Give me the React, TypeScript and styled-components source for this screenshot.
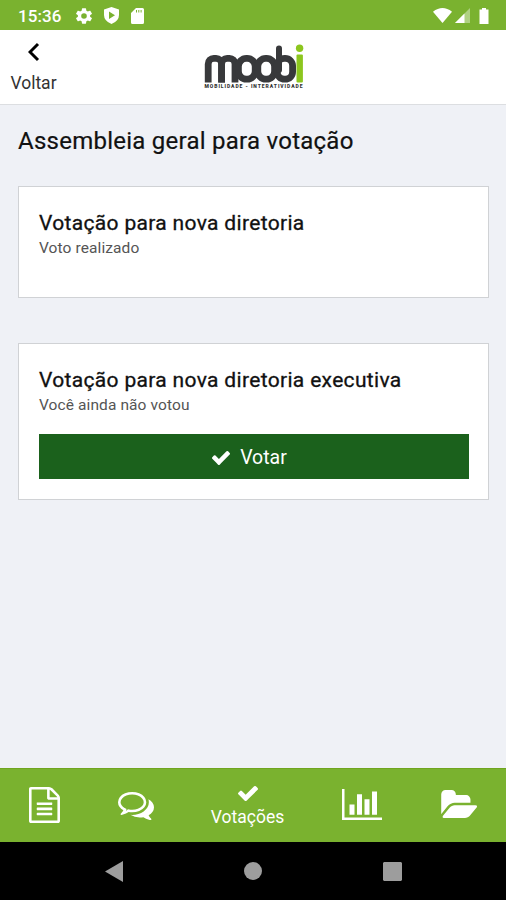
import React from "react";
import styled, { createGlobalStyle } from "styled-components";

const GlobalStyle = createGlobalStyle`
  * { box-sizing: border-box; }
  body { margin: 0; font-family: Roboto, "Liberation Sans", sans-serif; background: #eff1f6; }
  h1, h2, p { margin: 0; }
  button { font: inherit; border: 0; padding: 0; background: none; cursor: pointer; }
  svg { display: block; }
`;

const Screen = styled.div`
  width: 506px;
  height: 900px;
  display: flex;
  flex-direction: column;
  overflow: hidden;
`;

const StatusBar = styled.div`
  height: 30px;
  flex: none;
  display: flex;
  align-items: center;
  justify-content: space-between;
  padding: 1px 16px 0 18px;
  background: #7ab22f;
  color: #fff;
`;

const StatusGroup = styled.div<{ $gap: number }>`
  display: flex;
  align-items: center;
  gap: ${(p) => p.$gap}px;
`;

const Clock = styled.span`
  width: 45px;
  margin-right: 1px;
  font-size: 17px;
  font-weight: 500;
  letter-spacing: 0.1px;
  white-space: nowrap;
`;

const Header = styled.header`
  height: 75px;
  flex: none;
  display: grid;
  grid-template-columns: 67px 1fr 67px;
  background: #fff;
  border-bottom: 1px solid #dcdee1;
`;

const BackButton = styled.button`
  display: flex;
  flex-direction: column;
  align-items: center;
  padding-top: 12px;
  gap: 11px;
  color: #333;
  font-size: 17.5px;
  line-height: 20px;
`;

const LogoBox = styled.div`
  display: flex;
  justify-content: center;
  padding-top: 12px;
`;

const Content = styled.main`
  flex: 1;
  padding: 21px 17px 0 18px;
`;

const PageTitle = styled.h1`
  font-size: 24px;
  font-weight: 400;
  line-height: 30px;
  letter-spacing: 0.25px;
  color: #111;
  -webkit-text-stroke: 0.2px #111;
  white-space: nowrap;
`;

const Card = styled.section<{ $height: number; $top: number }>`
  height: ${(p) => p.$height}px;
  margin-top: ${(p) => p.$top}px;
  padding: 23px 19px 0 20px;
  background: #fff;
  border: 1px solid #d0d2d5;
`;

const CardTitle = styled.h2`
  font-size: 21px;
  font-weight: 400;
  line-height: 26px;
  letter-spacing: 0.33px;
  color: #111;
  -webkit-text-stroke: 0.3px #111;
  white-space: nowrap;
`;

const CardNote = styled.p`
  font-size: 15.5px;
  line-height: 24px;
  letter-spacing: 0.1px;
  color: #555;
`;

const VoteButton = styled.button`
  width: 100%;
  height: 45px;
  margin-top: 17px;
  padding: 2px 9px 0 0;
  display: flex;
  align-items: center;
  justify-content: center;
  gap: 10px;
  background: #1b611c;
  color: #fff;
  font-size: 19.5px;
`;

const TabBar = styled.nav`
  height: 74px;
  flex: none;
  display: grid;
  grid-template-columns: 89px 93px 131px 98px 95px;
  background: #7ab22f;
  border-top: 1px solid #70a51f;
`;

const Tab = styled.button<{ $top: number }>`
  display: flex;
  flex-direction: column;
  align-items: center;
  padding-top: ${(p) => p.$top}px;
  color: #fff;
`;

const TabLabel = styled.span`
  margin-top: 5px;
  font-size: 17.5px;
  line-height: 22px;
`;

const SystemNav = styled.div`
  height: 58px;
  flex: none;
  display: flex;
  justify-content: center;
  align-items: center;
  gap: 121px;
  background: #000;
  color: #9d9d9d;
`;

type IconProps = { box: string; w: number; h: number; d: string };

const Icon = ({ box, w, h, d }: IconProps) => (
  <svg viewBox={box} width={w} height={h} preserveAspectRatio="none" fill="currentColor" aria-hidden>
    <path fillRule="evenodd" d={d} />
  </svg>
);

const CHECK =
  "M1671 566q0 40-28 68l-724 724-136 136q-28 28-68 28t-68-28l-136-136-362-362q-28-28-28-68t28-68l136-136q28-28 68-28t68 28l294 295 656-657q28-28 68-28t68 28l136 136q28 28 28 68z";
const DOCUMENT =
  "M1596 380q28 28 48 76t20 88v1152q0 40-28 68t-68 28h-1344q-40 0-68-28t-28-68v-1600q0-40 28-68t68-28h896q40 0 88 20t76 48zm-444-244v376h376q-10-29-22-41l-313-313q-12-12-41-22zm384 1528v-1024h-416q-40 0-68-28t-28-68v-416h-768v1536h1280zm-1024-864q0-14 9-23t23-9h704q14 0 23 9t9 23v64q0 14-9 23t-23 9h-704q-14 0-23-9t-9-23v-64zm736 224q14 0 23 9t9 23v64q0 14-9 23t-23 9h-704q-14 0-23-9t-9-23v-64q0-14 9-23t23-9h704zm0 256q14 0 23 9t9 23v64q0 14-9 23t-23 9h-704q-14 0-23-9t-9-23v-64q0-14 9-23t23-9h704z";
const COMMENTS =
  "M704 384q-153 0-286 52t-211.5 141-78.5 191q0 82 53 158t149 132l97 56-35 84q34-20 62-39l44-31 53 10q78 14 153 14 153 0 286-52t211.5-141 78.5-191-78.5-191-211.5-141-286-52zm0-128q191 0 353.5 68.5t256.5 186.5 94 257-94 257-256.5 186.5-353.5 68.5q-86 0-176-16-124 88-278 128-36 9-86 16h-3q-11 0-20.5-8t-11.5-21q-1-3-1-6.5t.5-6.5 2-6l2.5-5 3.5-5.5 4-5 4.5-5 4-4.5q5-6 23-25t26-29.5 22.5-29 25-38.5 20.5-44q-124-72-195-177t-71-224q0-139 94-257t256.5-186.5 353.5-68.5zm822 1169q10 24 20.5 44t25 38.5 22.5 29 26 29.5 23 25q1 1 4 4.5t4.5 5 4 5 3.5 5.5l2.5 5 2 6 .5 6.5-1 6.5q-3 14-13 22t-22 7q-50-7-86-16-154-40-278-128-90 16-176 16-271 0-472-132 58 4 88 4 161 0 309-45t264-129q125-92 192-212t67-254q0-77-23-152 129 71 204 178t75 230q0 120-71 224.5t-195 176.5z";
const CHART =
  "M640 896v512h-256v-512h256zm384-512v1024h-256v-1024h256zm1024 1152v128h-2048v-1536h128v1408h1920zm-640-896v768h-256v-768h256zm384-384v1152h-256v-1152h256z";
const FOLDER =
  "M1943 952q0 31-31 66l-336 396q-43 51-120.5 86.5t-143.5 35.5h-1088q-34 0-60.5-13t-26.5-43q0-31 31-66l336-396q43-51 120.5-86.5t143.5-35.5h1088q34 0 60.5 13t26.5 43zm-343-344v160h-832q-94 0-197 47.5t-164 119.5l-337 396-5 6q0-4-.5-12.5t-.5-12.5v-960q0-92 66-158t158-66h320q92 0 158 66t66 158v32h544q92 0 158 66t66 158z";
const GEAR =
  "M19.14 12.94c.04-.3.06-.61.06-.94 0-.32-.02-.64-.07-.94l2.03-1.58a.49.49 0 0 0 .12-.61l-1.92-3.32a.49.49 0 0 0-.59-.22l-2.39.96a7 7 0 0 0-1.62-.94l-.36-2.54a.48.48 0 0 0-.48-.41h-3.84a.48.48 0 0 0-.47.41l-.36 2.54c-.59.24-1.13.57-1.62.94l-2.39-.96a.48.48 0 0 0-.59.22L2.74 8.87a.48.48 0 0 0 .12.61l2.03 1.58c-.05.3-.09.63-.09.94s.02.64.07.94l-2.03 1.58a.49.49 0 0 0-.12.61l1.92 3.32c.12.22.37.29.59.22l2.39-.96c.5.38 1.03.7 1.62.94l.36 2.54c.05.24.24.41.48.41h3.84c.24 0 .44-.17.47-.41l.36-2.54a7 7 0 0 0 1.62-.94l2.39.96c.22.08.47 0 .59-.22l1.92-3.32a.48.48 0 0 0-.12-.61zM12 15.3a3.3 3.3 0 1 1 0-6.6 3.3 3.3 0 0 1 0 6.6z";

/* Interlocking arches and rings over a tagline. */
const Logo = () => (
  <svg width="106" height="50" viewBox="0 0 106 50" role="img" aria-label="moobi">
    <g fill="none" stroke="#38393b" strokeWidth="6.8">
      <svg width="106" height="40.6" viewBox="0 0 106 40.6">
        <rect x="8.2" y="16.4" width="13.4" height="50" rx="5.5" />
        <rect x="21.6" y="16.4" width="13.4" height="50" rx="5.5" />
      </svg>
      <rect x="38.4" y="16.4" width="16.8" height="20.8" rx="8" />
      <rect x="57.8" y="16.4" width="16.8" height="20.8" rx="8" />
      <rect x="77.2" y="16.4" width="15.4" height="20.8" rx="7.4" />
      <line x1="79" y1="6.4" x2="79" y2="28" strokeWidth="6" strokeLinecap="round" />
    </g>
    <g fill="#8cc61e">
      <circle cx="99.6" cy="6.2" r="3.7" />
      <rect x="96.5" y="12.5" width="6.4" height="28" rx="1" />
    </g>
    <text x="4.5" y="46.4" fontFamily="Roboto, sans-serif" fontSize="5" fontWeight="900" fill="#333" textLength="98" lengthAdjust="spacing">
      MOBILIDADE - INTERATIVIDADE
    </text>
  </svg>
);

export default function App() {
  return (
    <>
      <GlobalStyle />
      <Screen>
        <StatusBar>
          <StatusGroup $gap={12}>
            <Clock>15:36</Clock>
            <Icon box="2.6 2 18.8 20" w={16} h={16} d={GEAR} />
            <Icon box="0 0 15 17" w={15} h={17} d="M7.5 0L15 2.5V8q0 6-7.5 9Q0 14 0 8V2.5zM5 4.5v7.5l6-3.75z" />
            <Icon box="0 0 13 16" w={13} h={16} d="M5 0h6.5Q13 0 13 1.5v13Q13 16 11.5 16h-10Q0 16 0 14.5V5zM5 2v2.5h1V2zM7.3 2v2.5h1V2zM9.6 2v2.5h1V2z" />
          </StatusGroup>
          <StatusGroup $gap={3}>
            <Icon box="0 0 20 16" w={19} h={15} d="M0 4Q10-4 20 4L10 16z" />
            <svg width="15" height="15" viewBox="0 0 15 15" fill="#fff" aria-hidden>
              <path d="M15 0v15H0z" opacity=".4" />
              <path d="M9.5 5.5V15H0z" />
            </svg>
            <svg width="17" height="16" viewBox="0 0 17 16" fill="#fff" aria-hidden>
              <path d="M9 0h4v1.5h2.5V16h-9V1.5H9z" />
            </svg>
          </StatusGroup>
        </StatusBar>
        <Header>
          <BackButton>
            <svg width="12" height="20" viewBox="0 0 12 20" fill="none" stroke="#000" strokeWidth="3" aria-hidden>
              <path d="M10 2L2 10L10 18" />
            </svg>
            Voltar
          </BackButton>
          <LogoBox>
            <Logo />
          </LogoBox>
        </Header>
        <Content>
          <PageTitle>Assembleia geral para votação</PageTitle>
          <Card $height={112} $top={30}>
            <CardTitle>Votação para nova diretoria</CardTitle>
            <CardNote>Voto realizado</CardNote>
          </Card>
          <Card $height={157} $top={45}>
            <CardTitle>Votação para nova diretoria executiva</CardTitle>
            <CardNote>Você ainda não votou</CardNote>
            <VoteButton>
              <Icon box="121 334 1550 1188" w={18} h={14} d={CHECK} />
              Votar
            </VoteButton>
          </Card>
        </Content>
        <TabBar>
          <Tab $top={18} aria-label="Documentos">
            <Icon box="128 0 1536 1792" w={31} h={36} d={DOCUMENT} />
          </Tab>
          <Tab $top={23} aria-label="Mensagens">
            <Icon box="0 256 1792 1408" w={36} h={28} d={COMMENTS} />
          </Tab>
          <Tab $top={17}>
            <Icon box="121 334 1550 1188" w={20} h={15} d={CHECK} />
            <TabLabel>Votações</TabLabel>
          </Tab>
          <Tab $top={20} aria-label="Resultados">
            <Icon box="0 128 2048 1536" w={40} h={31} d={CHART} />
          </Tab>
          <Tab $top={21} aria-label="Arquivos">
            <Icon box="0 128 1943 1408" w={37} h={28} d={FOLDER} />
          </Tab>
        </TabBar>
        <SystemNav>
          <Icon box="0 0 18 21" w={18} h={21} d="M18 0v21L0 10.5z" />
          <Icon box="0 0 18 18" w={18} h={18} d="M9 0a9 9 0 1 1 0 18A9 9 0 1 1 9 0z" />
          <Icon box="0 0 19 19" w={19} h={19} d="M1 0h17l1 1v17l-1 1H1l-1-1V1z" />
        </SystemNav>
      </Screen>
    </>
  );
}
